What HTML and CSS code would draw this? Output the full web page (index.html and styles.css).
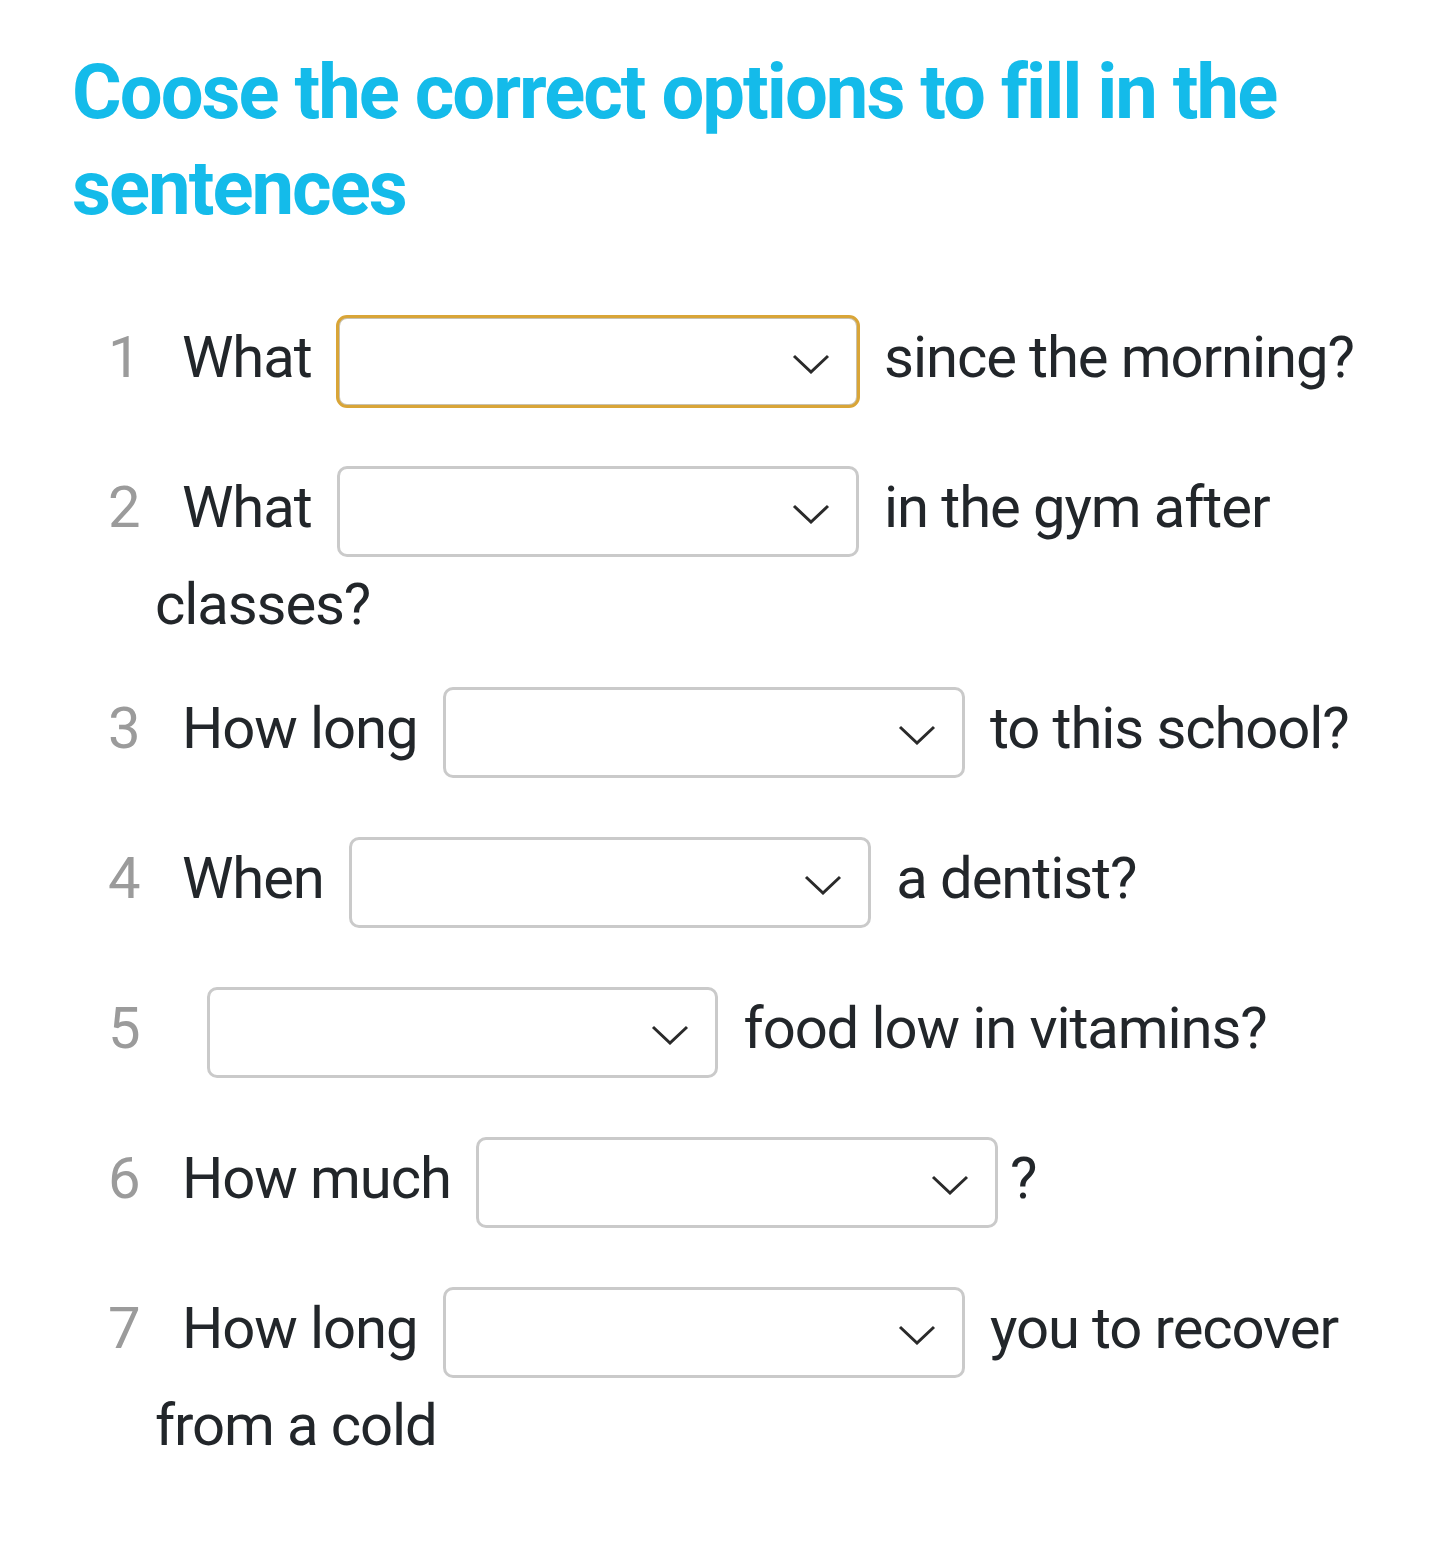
FILE: index.html
```html
<!DOCTYPE html>
<html lang="en">
<head>
<meta charset="utf-8">
<title>Choose the correct options</title>
<link rel="stylesheet" href="styles.css">
</head>
<body>
<main class="page">
  <h1 class="title">Coose the correct options to fill in the sentences</h1>
  <div class="items">
    <p class="item"><span class="num">1</span>What <span class="select is-focused"><svg class="chev" viewBox="0 0 38 20"><path d="M2 2 L19 18 L36 2"/></svg></span> since the morning?</p>
    <p class="item"><span class="num">2</span>What <span class="select"><svg class="chev" viewBox="0 0 38 20"><path d="M2 2 L19 18 L36 2"/></svg></span> in the gym after classes?</p>
    <p class="item"><span class="num">3</span>How long <span class="select"><svg class="chev" viewBox="0 0 38 20"><path d="M2 2 L19 18 L36 2"/></svg></span> to this school?</p>
    <p class="item"><span class="num">4</span>When <span class="select"><svg class="chev" viewBox="0 0 38 20"><path d="M2 2 L19 18 L36 2"/></svg></span> a dentist?</p>
    <p class="item"><span class="num">5</span> <span class="select select-narrow"><svg class="chev" viewBox="0 0 38 20"><path d="M2 2 L19 18 L36 2"/></svg></span> food low in vitamins?</p>
    <p class="item"><span class="num">6</span>How much <span class="select"><svg class="chev" viewBox="0 0 38 20"><path d="M2 2 L19 18 L36 2"/></svg></span>?</p>
    <p class="item"><span class="num">7</span>How long <span class="select"><svg class="chev" viewBox="0 0 38 20"><path d="M2 2 L19 18 L36 2"/></svg></span> you to recover from a cold</p>
  </div>
</main>
</body>
</html>
```
FILE: styles.css
```css
html, body {
  margin: 0;
  padding: 0;
  background: #ffffff;
}

.page {
  padding: 44px 72px 60px 72px;
  font-family: Roboto, "Liberation Sans", sans-serif;
}

.title {
  margin: 0;
  font-family: Roboto, "Liberation Sans", sans-serif;
  font-weight: 700;
  font-size: 76px;
  line-height: 96px;
  color: #14bbea;
  letter-spacing: -2px;
}

.items {
  margin-top: 68px;
  padding-left: 83px;
}

.item {
  margin: 0 0 35px 0;
  font-size: 58px;
  line-height: 71px;
  letter-spacing: -1.1px;
  color: #22262a;
}

.num {
  display: inline-block;
  width: 74px;
  margin-left: -47px;
  color: #9b9b9b;
  letter-spacing: 0;
}

.select {
  display: inline-flex;
  align-items: center;
  justify-content: flex-end;
  box-sizing: border-box;
  width: 522px;
  height: 91px;
  margin: 12px;
  padding-right: 26px;
  vertical-align: middle;
  border: 3px solid #cacaca;
  border-radius: 10px;
  background: #ffffff;
}

.select-narrow {
  width: 511px;
}

.select.is-focused {
  border-color: #c9c2b0;
  outline: 3px solid #d9a537;
  outline-offset: -2px;
}

.chev {
  width: 38px;
  height: 20px;
  margin-top: 4px;
  fill: none;
  stroke: #2a2a2a;
  stroke-width: 3;
}
```
